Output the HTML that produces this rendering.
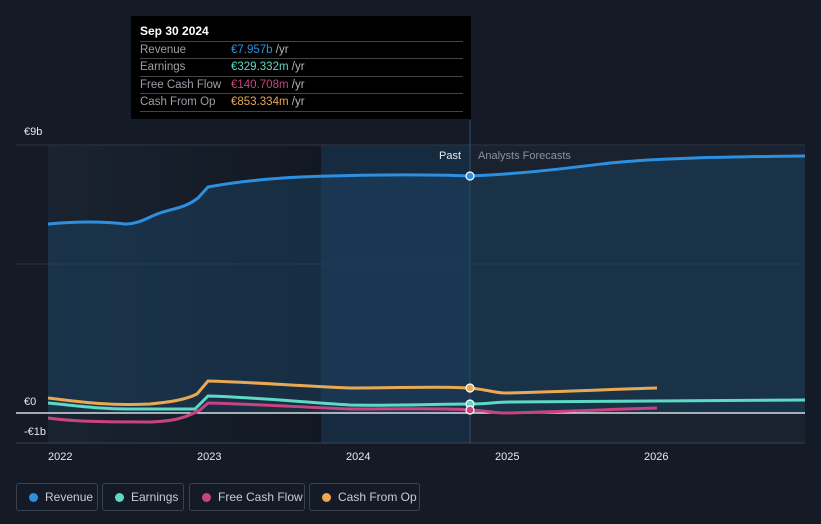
<!DOCTYPE html>
<html><head><meta charset="utf-8"><style>
body{margin:0;width:821px;height:524px;background:#151b26;font-family:"Liberation Sans",sans-serif;overflow:hidden;position:relative}
.tip{position:absolute;left:131px;top:16px;width:340px;height:103px;background:#000;color:#fff;font-size:11.5px}
.tip .h{position:absolute;left:9px;top:8px;font-weight:bold;font-size:12px}
.row{position:absolute;left:9px;width:323px;height:17px;border-top:1px solid #444;color:#9aa0a8;line-height:17px}
.row span{position:absolute;left:91px}
.row i{font-style:normal;color:#b0b5bb}
.lg{position:absolute;top:483px;height:28px;border:1px solid #3a4250;border-radius:3px;color:#c8ccd2;font-size:12px;line-height:26px;box-sizing:border-box;padding-left:28px}
.lg b{position:absolute;left:12px;top:9px;width:9px;height:9px;border-radius:50%}
.ax{position:absolute;color:#e6e8eb;font-size:11px}
</style></head><body>
<svg width="821" height="524" style="position:absolute;left:0;top:0">
<defs>
<linearGradient id="pg" x1="0" y1="0" x2="1" y2="0"><stop offset="0" stop-color="#1a2331"/><stop offset="1" stop-color="#121823"/></linearGradient>
</defs>
<rect x="48" y="145" width="273" height="298" fill="url(#pg)"/>
<rect x="321" y="145" width="149" height="298" fill="#162a40"/>
<rect x="470" y="145" width="335" height="298" fill="#19222e"/>
<line x1="16" y1="145" x2="805" y2="145" stroke="#2e3642"/>
<line x1="16" y1="264" x2="805" y2="264" stroke="#2a323d"/>
<line x1="16" y1="443" x2="805" y2="443" stroke="#3a4250"/>
<line x1="470" y1="120" x2="470" y2="443" stroke="#2f5070"/>
<path d="M48,224 C70,222 100,221 125,224 C140,224 150,216 160,213 C175,208 185,208 198,198 L208,187 C230,183 260,179 300,177 C350,175 420,174 470,176 C520,174 560,169 610,163 C660,158 720,157 805,156 L805,413 L48,413Z" fill="#1d4668" fill-opacity="0.45"/>
<path d="M48,224 C70,222 100,221 125,224 C140,224 150,216 160,213 C175,208 185,208 198,198 L208,187 C230,183 260,179 300,177 C350,175 420,174 470,176 C520,174 560,169 610,163 C660,158 720,157 805,156" fill="none" stroke="#2d8fe0" stroke-width="3"/>
<line x1="16" y1="413" x2="805" y2="413" stroke="#ffffff" stroke-width="1.2"/>
<path d="M48,398 C80,402 110,406 150,404 C170,402 185,400 197,394 L208,381 C250,382 300,386 350,388 C400,388 440,386 470,388 C490,390 495,393 505,393 C560,392 620,389 657,388" fill="none" stroke="#e8a854" stroke-width="3"/>
<path d="M48,403 C80,406 100,409 130,409 L195,409 L208,396 C250,397 300,402 350,405 C400,406 430,404 470,404 C490,404 495,402 510,402 L805,400" fill="none" stroke="#5ed9c3" stroke-width="3"/>
<path d="M48,418 C70,421 90,422 150,422 C175,421 185,418 200,410 L208,403 C250,404 300,407 350,409 C400,409 440,408 470,410 C490,411 495,413 505,413 C560,412 620,409 657,408" fill="none" stroke="#c8447f" stroke-width="3"/>
<circle cx="470" cy="176" r="4" fill="#2d8fe0" stroke="#fff" stroke-width="1.2"/>
<circle cx="470" cy="388" r="4" fill="#e8a854" stroke="#fff" stroke-width="1.2"/>
<circle cx="470" cy="404" r="4" fill="#5ed9c3" stroke="#fff" stroke-width="1.2"/>
<circle cx="470" cy="410" r="4" fill="#c8447f" stroke="#fff" stroke-width="1.2"/>
</svg>
<div class="ax" style="left:24px;top:126px">€9b</div>
<div class="ax" style="left:24px;top:396px">€0</div>
<div class="ax" style="left:24px;top:426px">-€1b</div>
<div class="ax" style="left:439px;top:150px;font-size:11px">Past</div>
<div class="ax" style="left:478px;top:150px;color:#8a929c">Analysts Forecasts</div>
<div class="ax" style="left:48px;top:451px">2022</div>
<div class="ax" style="left:197px;top:451px">2023</div>
<div class="ax" style="left:346px;top:451px">2024</div>
<div class="ax" style="left:495px;top:451px">2025</div>
<div class="ax" style="left:644px;top:451px">2026</div>
<div class="tip"><div class="h">Sep 30 2024</div>
<div class="row" style="top:25px">Revenue<span><em style="font-style:normal;color:#2d8fe0">€7.957b</em> <i>/yr</i></span></div>
<div class="row" style="top:42px">Earnings<span><em style="font-style:normal;color:#5ed9c3">€329.332m</em> <i>/yr</i></span></div>
<div class="row" style="top:60px">Free Cash Flow<span><em style="font-style:normal;color:#c8447f">€140.708m</em> <i>/yr</i></span></div>
<div class="row" style="top:77px;border-bottom:1px solid #444">Cash From Op<span><em style="font-style:normal;color:#e8a854">€853.334m</em> <i>/yr</i></span></div>
</div>
<div class="lg" style="left:16px;width:82px"><b style="background:#2d8fe0"></b>Revenue</div>
<div class="lg" style="left:102px;width:82px"><b style="background:#5ed9c3"></b>Earnings</div>
<div class="lg" style="left:189px;width:116px"><b style="background:#c8447f"></b>Free Cash Flow</div>
<div class="lg" style="left:309px;width:111px"><b style="background:#e8a854"></b>Cash From Op</div>
</body></html>
